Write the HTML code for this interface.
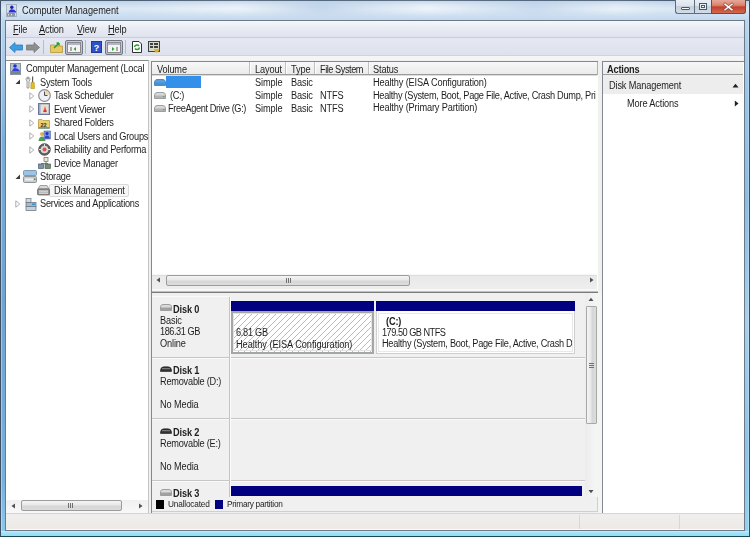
<!DOCTYPE html>
<html><head><meta charset="utf-8">
<style>
*{margin:0;padding:0;box-sizing:border-box}
html,body{width:750px;height:537px;overflow:hidden}
body{position:relative;background:#f0f0f0;font-family:"Liberation Sans",sans-serif;font-size:9px;letter-spacing:-0.1px;color:#1a1a1a}
.a{position:absolute}
.t{position:absolute;white-space:nowrap;line-height:11px;font-size:10px;letter-spacing:-0.15px;transform:scaleX(0.92);transform-origin:0 0;color:#1e1e1e}
.b{font-weight:bold}
svg{position:absolute;overflow:visible}
</style></head><body>
<div class="a" style="left:0px;top:0px;width:750px;height:537px;background:#6fa3d0"></div>
<div class="a" style="left:1px;top:0px;width:4px;height:537px;background:linear-gradient(180deg,#c4dcef 0,#a9cbe8 60px,#7aaed8 140px,#6fa3d0 300px,#78b0dc 480px,#8ccbec 537px)"></div>
<div class="a" style="left:745px;top:0px;width:4px;height:537px;background:linear-gradient(180deg,#c4dcef 0,#9cc6ea 80px,#8abde6 200px,#a6d0ee 320px,#8cc4ea 450px,#90d4f0 537px)"></div>
<div class="a" style="left:1px;top:0px;width:1px;height:537px;background:rgba(255,255,255,.35)"></div>
<div class="a" style="left:748px;top:0px;width:1px;height:537px;background:rgba(255,255,255,.25)"></div>
<div class="a" style="left:0px;top:0px;width:1px;height:537px;background:#3e5068"></div>
<div class="a" style="left:749px;top:0px;width:1px;height:537px;background:#2e5068"></div>
<div class="a" style="left:1px;top:0px;width:748px;height:20px;background:linear-gradient(180deg,#b9d0e8 0,#cfe0f1 25%,#dde9f5 45%,#d2e2f2 65%,#c3d8ee 100%)"></div>
<div class="a" style="left:0px;top:0px;width:750px;height:1px;background:#4c5e72"></div>
<div class="a" style="left:130px;top:3px;width:540px;height:10px;background:linear-gradient(90deg,rgba(255,255,255,0),rgba(255,255,255,.5) 20%,rgba(170,195,225,.5) 35%,rgba(255,255,255,.55) 55%,rgba(175,200,228,.45) 75%,rgba(255,255,255,.4) 90%,rgba(255,255,255,0));filter:blur(3px)"></div>
<div class="a" style="left:1px;top:531px;width:748px;height:6px;background:linear-gradient(180deg,#d4e2f6 0,#d4e2f6 1px,#a8e4f8 1px,#90dcf4 5px,#1a4858 5px)"></div>
<div class="a" style="left:0px;top:536px;width:750px;height:1px;background:#1a4858"></div>
<div class="a" style="left:5px;top:20px;width:740px;height:511px;border:1px solid #6a7a88;background:#f0f0f0"></div>
<svg style="left:5px;top:3px" width="14" height="15" viewBox="0 0 14 15"><rect x="1.5" y="1.5" width="10" height="12" fill="#d4dce4" stroke="#a8b2bc" stroke-width="1"/><rect x="2" y="10" width="8" height="3.5" fill="#8a96a2"/><rect x="3" y="11" width="1" height="1.5" fill="#e0e0e0"/><rect x="6" y="11" width="1" height="1.5" fill="#e0e0e0"/><circle cx="6.8" cy="4.2" r="1.7" fill="#1a20c0"/><path d="M3.5 9.5 Q4.5 6.3 6.8 6.3 Q9.5 6.3 11 8.5 L11 9.5 Z" fill="#2a30d8"/></svg>
<div class="t" style="left:21.5px;top:4.5px;letter-spacing:0;color:#1a1a1a">Computer Management</div>
<div class="a" style="left:675px;top:0;width:20px;height:14px;border:1px solid #5d6d7e;border-top:none;border-right:none;border-radius:0 0 0 3px;background:linear-gradient(180deg,#e9eef4 0,#dbe3ec 45%,#c3cfdb 50%,#d2dde8 100%)"></div>
<div class="a" style="left:694px;top:0;width:18px;height:14px;border:1px solid #5d6d7e;border-top:none;border-right:none;background:linear-gradient(180deg,#e9eef4 0,#dbe3ec 45%,#c3cfdb 50%,#d2dde8 100%)"></div>
<div class="a" style="left:711px;top:0;width:35px;height:14px;border:1px solid #5d5050;border-top:none;border-radius:0 0 3px 0;background:linear-gradient(180deg,#e8a898 0,#d98470 40%,#c4402a 55%,#d46a50 100%)"></div>
<div class="a" style="left:681px;top:7px;width:9px;height:3px;border:1px solid #4a5868;background:#f6f8fa;border-radius:1px"></div>
<div class="a" style="left:699px;top:3px;width:8px;height:7px;border:1px solid #4a5868;background:#e8edf2"></div>
<div class="a" style="left:701px;top:5px;width:4px;height:3px;border:1px solid #4a5868;background:#fff"></div>
<svg style="left:723px;top:3px" width="11" height="8" viewBox="0 0 11 8"><path d="M2 1.2 L9 6.8 M9 1.2 L2 6.8" stroke="#8a4a40" stroke-width="2.8" stroke-linecap="square"/><path d="M2 1.2 L9 6.8 M9 1.2 L2 6.8" stroke="#fff" stroke-width="1.5" stroke-linecap="square"/></svg>
<div class="a" style="left:6px;top:21px;width:738px;height:16px;background:linear-gradient(180deg,#f6f7fb 0,#e8ebf3 50%,#dfe3ee 100%)"></div>
<div class="a" style="left:6px;top:37px;width:738px;height:1px;background:#c8cdd8"></div>
<div class="t " style="left:13px;top:24.3px;"><u>F</u>ile</div>
<div class="t " style="left:39px;top:24.3px;"><u>A</u>ction</div>
<div class="t " style="left:77px;top:24.3px;"><u>V</u>iew</div>
<div class="t " style="left:108px;top:24.3px;"><u>H</u>elp</div>
<div class="a" style="left:6px;top:38px;width:738px;height:17px;background:linear-gradient(180deg,#e6e9f3 0,#dde1ed 100%)"></div>
<div class="a" style="left:6px;top:55px;width:738px;height:1px;background:#cfd3dc"></div>
<div class="a" style="left:6px;top:56px;width:738px;height:4px;background:#f5f5f5"></div>
<svg style="left:9px;top:42px" width="14" height="11" viewBox="0 0 14 11"><path d="M0.5 5.5 L6 0.5 L6 3 L13.5 3 L13.5 8 L6 8 L6 10.5 Z" fill="#3c9ee0" stroke="#2a7cc0" stroke-width="0.8"/></svg>
<svg style="left:26px;top:42px" width="14" height="11" viewBox="0 0 14 11"><path d="M13.5 5.5 L8 0.5 L8 3 L0.5 3 L0.5 8 L8 8 L8 10.5 Z" fill="#8e8e8e" stroke="#7a7a7a" stroke-width="0.8"/></svg>
<div class="a" style="left:43px;top:40px;width:1px;height:14px;background:#b8bcc6"></div>
<svg style="left:50px;top:41px" width="13" height="12" viewBox="0 0 13 12"><path d="M0.5 4 L5 4 L6 5 L12.5 5 L12.5 11.5 L0.5 11.5 Z" fill="#e8c860" stroke="#b89838" stroke-width="0.8"/><path d="M4 7 L9 2 M9 2 L6.5 2 M9 2 L9 4.5" stroke="#30a030" stroke-width="1.6" fill="none"/></svg>
<div class="a" style="left:65px;top:40px;width:18px;height:15px;border:1px solid #707888;border-radius:2px;background:linear-gradient(180deg,#c9ccd6,#b8bcc8)"></div>
<svg style="left:67px;top:42px" width="14" height="11" viewBox="0 0 14 11"><rect x="0.5" y="0.5" width="13" height="10" fill="#f4f4f4" stroke="#8a8a8a"/><rect x="1" y="1" width="12" height="2" fill="#b0b8c8"/><path d="M4 5 L4 9" stroke="#606060"/><path d="M9 5 L6.5 7 L9 9 Z" fill="#30a030"/></svg>
<div class="a" style="left:85px;top:40px;width:1px;height:14px;background:#b8bcc6"></div>
<svg style="left:91px;top:41px" width="11" height="12" viewBox="0 0 11 12"><rect x="0.5" y="0.5" width="10" height="11" fill="#2f50c8" stroke="#2038a0"/><text x="5.5" y="9.5" font-family="Liberation Sans" font-size="9" font-weight="bold" fill="#fff" text-anchor="middle">?</text></svg>
<div class="a" style="left:105px;top:40px;width:18px;height:15px;border:1px solid #707888;border-radius:2px;background:linear-gradient(180deg,#c9ccd6,#b8bcc8)"></div>
<svg style="left:107px;top:42px" width="14" height="11" viewBox="0 0 14 11"><rect x="0.5" y="0.5" width="13" height="10" fill="#f4f4f4" stroke="#8a8a8a"/><rect x="1" y="1" width="12" height="2" fill="#b0b8c8"/><path d="M10 5 L10 9" stroke="#606060"/><path d="M5 5 L7.5 7 L5 9 Z" fill="#30a030"/></svg>
<div class="a" style="left:125px;top:40px;width:1px;height:14px;background:#b8bcc6"></div>
<svg style="left:132px;top:41px" width="10" height="12" viewBox="0 0 10 12"><path d="M0.5 0.5 L7 0.5 L9.5 3 L9.5 11.5 L0.5 11.5 Z" fill="#fff" stroke="#303030"/><path d="M2.5 6 A2.5 2.5 0 0 1 7 5" stroke="#28a028" stroke-width="1.5" fill="none"/><path d="M7.5 6.5 A2.5 2.5 0 0 1 3 7.5" stroke="#28a028" stroke-width="1.5" fill="none"/></svg>
<svg style="left:148px;top:41px" width="12" height="12" viewBox="0 0 12 12"><rect x="0.5" y="0.5" width="11" height="10" fill="#d8d8c8" stroke="#404040"/><rect x="2" y="2" width="3" height="2" fill="#404040"/><rect x="6" y="2" width="4" height="2" fill="#404040"/><rect x="2" y="5" width="3" height="2" fill="#404040"/><rect x="6" y="5" width="4" height="2" fill="#404040"/><path d="M6 8 L11.5 8 L10 11.5 L7 11.5 Z" fill="#e0b020"/></svg>
<div class="a" style="left:6px;top:60px;width:143px;height:454px;background:#fff;border-top:1px solid #8a8a8a;border-right:1px solid #c4c4c4;border-bottom:1px solid #c8c8c8"></div>
<div class="a" style="left:49px;top:184px;width:80px;height:13px;background:#f6f6f6;border:1px solid #d9d9d9;border-radius:2px"></div>
<svg style="left:10px;top:62.7px" width="12" height="12" viewBox="0 0 12 12"><rect x="0.5" y="0.5" width="10" height="11" fill="#b8c0c8" stroke="#8a949e"/><rect x="1" y="8" width="9" height="3" fill="#78848e"/><circle cx="5" cy="3" r="1.8" fill="#2030d0"/><path d="M2 8 Q3 5 5 5 Q8 5 10 8 Z" fill="#3040e0"/></svg>
<div class="t " style="left:25.7px;top:63.3px;letter-spacing:-0.25px">Computer Management (Local</div>
<svg style="left:14.899999999999999px;top:79.2px" width="6" height="6" viewBox="0 0 6 6"><path d="M5 0.5 L5 5 L0.5 5 Z" fill="#3a3a3a"/></svg>
<svg style="left:25px;top:76.2px" width="11" height="13" viewBox="0 0 11 13"><path d="M2.5 1 Q0.5 2 1 4 L2 5 L2 12 L4 12 L4 5 L5 4 Q5.5 2 3.5 1 L3.5 3 L2.5 3 Z" fill="#e8e8e8" stroke="#909090" stroke-width="0.8"/><rect x="7" y="0.5" width="1.2" height="6" fill="#606060"/><path d="M6 6.5 L9.2 6.5 L9.5 12.5 L5.8 12.5 Z" fill="#e0c020" stroke="#b09010" stroke-width="0.6"/></svg>
<div class="t " style="left:39.9px;top:76.8px;letter-spacing:-0.25px">System Tools</div>
<svg style="left:29.4px;top:91.7px" width="6" height="8" viewBox="0 0 6 8"><path d="M0.8 0.8 L4.8 4 L0.8 7.2 Z" fill="none" stroke="#a6a6a6" stroke-width="0.9"/></svg>
<svg style="left:38px;top:89.2px" width="13" height="13" viewBox="0 0 13 13"><circle cx="6.5" cy="6.5" r="5.8" fill="#eef2f8" stroke="#8c8c8c" stroke-width="1.2"/><path d="M6.5 2.5 L6.5 6.5 L9.5 6.5" stroke="#505050" stroke-width="1" fill="none"/><path d="M7 1.5 A5 5 0 0 1 11.5 6 L7 6 Z" fill="#e8d098" opacity=".7"/></svg>
<div class="t " style="left:54.4px;top:90.3px;letter-spacing:-0.25px">Task Scheduler</div>
<svg style="left:29.4px;top:105.2px" width="6" height="8" viewBox="0 0 6 8"><path d="M0.8 0.8 L4.8 4 L0.8 7.2 Z" fill="none" stroke="#a6a6a6" stroke-width="0.9"/></svg>
<svg style="left:38px;top:103.2px" width="12" height="12" viewBox="0 0 12 12"><rect x="0.5" y="0.5" width="11" height="11" fill="#9aa8c8" stroke="#6878a0"/><rect x="2.5" y="1.5" width="8" height="9" fill="#e8e0d0"/><path d="M5 9 L7 3 L9 9 Z" fill="#e07030"/><circle cx="7" cy="8" r="1.3" fill="#d03060"/></svg>
<div class="t " style="left:54.4px;top:103.8px;letter-spacing:-0.25px">Event Viewer</div>
<svg style="left:29.4px;top:118.7px" width="6" height="8" viewBox="0 0 6 8"><path d="M0.8 0.8 L4.8 4 L0.8 7.2 Z" fill="none" stroke="#a6a6a6" stroke-width="0.9"/></svg>
<svg style="left:38px;top:116.7px" width="12" height="12" viewBox="0 0 12 12"><path d="M0.5 2.5 L4 2.5 L5 3.5 L11.5 3.5 L11.5 11.5 L0.5 11.5 Z" fill="#ecd070" stroke="#b09030" stroke-width="0.7"/><text x="5.5" y="10" font-family="Liberation Sans" font-size="5.5" font-weight="bold" fill="#303030" text-anchor="middle">22</text><rect x="0.5" y="10" width="11" height="1.5" fill="#50a0d0"/></svg>
<div class="t " style="left:54.4px;top:117.3px;letter-spacing:-0.25px">Shared Folders</div>
<svg style="left:29.4px;top:132.2px" width="6" height="8" viewBox="0 0 6 8"><path d="M0.8 0.8 L4.8 4 L0.8 7.2 Z" fill="none" stroke="#a6a6a6" stroke-width="0.9"/></svg>
<svg style="left:38px;top:130.2px" width="13" height="12" viewBox="0 0 13 12"><circle cx="4" cy="4" r="2" fill="#e0b050"/><path d="M0.5 11 Q1 6.5 4 6.5 Q7 6.5 7.5 11 Z" fill="#50a050"/><rect x="6" y="1" width="6.5" height="8" fill="#8098d8" stroke="#5068b0" stroke-width="0.6"/><circle cx="9" cy="3.5" r="1.5" fill="#2030c0"/><path d="M6.5 8.5 Q7 5.5 9 5.5 Q11 5.5 12 8.5 Z" fill="#3040d0"/></svg>
<div class="t " style="left:54.4px;top:130.8px;letter-spacing:-0.25px">Local Users and Groups</div>
<svg style="left:29.4px;top:145.7px" width="6" height="8" viewBox="0 0 6 8"><path d="M0.8 0.8 L4.8 4 L0.8 7.2 Z" fill="none" stroke="#a6a6a6" stroke-width="0.9"/></svg>
<svg style="left:38px;top:143.2px" width="13" height="13" viewBox="0 0 13 13"><circle cx="6.5" cy="6.5" r="5.8" fill="#606060" stroke="#404040" stroke-width="0.8"/><circle cx="6.5" cy="6.5" r="3.8" fill="#d8d8d8"/><circle cx="6.5" cy="6.5" r="2" fill="#e05050"/><path d="M6.5 1 L6.5 3 M1 6.5 L3 6.5 M10 6.5 L12 6.5" stroke="#fff" stroke-width="0.8"/></svg>
<div class="t " style="left:54.4px;top:144.3px;letter-spacing:-0.25px">Reliability and Performa</div>
<svg style="left:38px;top:157.2px" width="13" height="12" viewBox="0 0 13 12"><rect x="6" y="0.5" width="4" height="4" fill="#e8e8d0" stroke="#707070" stroke-width="0.7"/><path d="M8 4.5 L8 6.5 M3 6.5 L10 6.5" stroke="#606060" stroke-width="0.8"/><rect x="0.5" y="7" width="5" height="4.5" fill="#8090a8" stroke="#506070" stroke-width="0.7"/><rect x="7" y="7" width="5.5" height="4.5" fill="#709070" stroke="#506050" stroke-width="0.7"/></svg>
<div class="t " style="left:54.4px;top:157.8px;letter-spacing:-0.25px">Device Manager</div>
<svg style="left:14.899999999999999px;top:173.7px" width="6" height="6" viewBox="0 0 6 6"><path d="M5 0.5 L5 5 L0.5 5 Z" fill="#3a3a3a"/></svg>
<svg style="left:23px;top:169.7px" width="14" height="13" viewBox="0 0 14 13"><rect x="0.5" y="0.5" width="13" height="5" rx="1" fill="#9cc4e4" stroke="#6a8aa8" stroke-width="0.8"/><rect x="0.5" y="6.5" width="13" height="6" rx="1" fill="#c8ccd0" stroke="#7c8288" stroke-width="0.8"/><rect x="2" y="8.5" width="8" height="2" fill="#f0f0f0"/><rect x="11" y="8.5" width="1.5" height="1.5" fill="#40a040"/></svg>
<div class="t " style="left:39.9px;top:171.3px;letter-spacing:-0.25px">Storage</div>
<svg style="left:37px;top:184.2px" width="13" height="12" viewBox="0 0 13 12"><path d="M1 5 L3 1.5 L10 1.5 L12 5 Z" fill="#d8d8d8" stroke="#808080" stroke-width="0.7"/><rect x="0.5" y="5" width="12" height="6" rx="1" fill="#909090" stroke="#606060" stroke-width="0.7"/><rect x="2" y="6.5" width="9" height="1.2" fill="#e8e8e8"/><rect x="2" y="8.5" width="9" height="1.2" fill="#e8e8e8"/></svg>
<div class="t " style="left:54.4px;top:184.8px;letter-spacing:-0.25px">Disk Management</div>
<svg style="left:14.899999999999999px;top:199.7px" width="6" height="8" viewBox="0 0 6 8"><path d="M0.8 0.8 L4.8 4 L0.8 7.2 Z" fill="none" stroke="#a6a6a6" stroke-width="0.9"/></svg>
<svg style="left:25px;top:197.7px" width="12" height="13" viewBox="0 0 12 13"><rect x="1" y="0.5" width="5" height="4" fill="#d0d8e0" stroke="#707880" stroke-width="0.7"/><rect x="1" y="4.5" width="10" height="4" fill="#a8b8c8" stroke="#607080" stroke-width="0.7"/><rect x="1" y="8.5" width="10" height="4" fill="#c8d0d8" stroke="#607080" stroke-width="0.7"/><rect x="7" y="5.5" width="3" height="1.5" fill="#3090d0"/></svg>
<div class="t " style="left:39.9px;top:198.3px;letter-spacing:-0.25px">Services and Applications</div>
<div class="a" style="left:6px;top:500px;width:142px;height:13px;background:linear-gradient(180deg,#f0f0f0,#f8f8f8)"></div>
<div class="a" style="left:21px;top:500px;width:101px;height:11px;border:1px solid #9c9c9c;border-radius:2px;background:linear-gradient(180deg,#f4f4f4 0,#e8e8e8 45%,#d6d6d6 55%,#dcdcdc 100%)"></div>
<div class="a" style="left:68px;top:503px;width:1px;height:5px;background:#707070"></div>
<div class="a" style="left:70px;top:503px;width:1px;height:5px;background:#707070"></div>
<div class="a" style="left:72px;top:503px;width:1px;height:5px;background:#707070"></div>
<svg style="left:11px;top:503px" width="5" height="6" viewBox="0 0 5 6"><path d="M4 0.5 L0.5 3 L4 5.5 Z" fill="#505050"/></svg>
<svg style="left:138px;top:503px" width="5" height="6" viewBox="0 0 5 6"><path d="M1 0.5 L4.5 3 L1 5.5 Z" fill="#505050"/></svg>
<div class="a" style="left:151px;top:61px;width:447px;height:232px;background:#fff;border:1px solid #828790;border-bottom:none;border-right:none"></div>
<div class="a" style="left:152px;top:62px;width:445px;height:13px;background:linear-gradient(180deg,#f8f8f8 0,#f0f0f0 50%,#ebebeb 100%)"></div>
<div class="a" style="left:152px;top:74px;width:445px;height:1px;background:#9c9c9c"></div>
<div class="a" style="left:152px;top:75px;width:445px;height:1px;background:#dcdcdc"></div>
<div class="a" style="left:249px;top:62px;width:1px;height:12px;background:#c0c0c0"></div>
<div class="a" style="left:250px;top:62px;width:1px;height:12px;background:#fdfdfd"></div>
<div class="a" style="left:285px;top:62px;width:1px;height:12px;background:#c0c0c0"></div>
<div class="a" style="left:286px;top:62px;width:1px;height:12px;background:#fdfdfd"></div>
<div class="a" style="left:314px;top:62px;width:1px;height:12px;background:#c0c0c0"></div>
<div class="a" style="left:315px;top:62px;width:1px;height:12px;background:#fdfdfd"></div>
<div class="a" style="left:368px;top:62px;width:1px;height:12px;background:#c0c0c0"></div>
<div class="a" style="left:369px;top:62px;width:1px;height:12px;background:#fdfdfd"></div>
<div class="a" style="left:597px;top:62px;width:1px;height:13px;background:#b0b0b0"></div>
<div class="t " style="left:157px;top:63.5px;">Volume</div>
<div class="t " style="left:254.6px;top:63.5px;">Layout</div>
<div class="t " style="left:290.5px;top:63.5px;">Type</div>
<div class="t " style="left:319.8px;top:63.5px;letter-spacing:-0.5px">File System</div>
<div class="t " style="left:373px;top:63.5px;">Status</div>
<div class="a" style="left:166px;top:76px;width:35px;height:12px;background:#3390ea"></div>
<svg style="left:154px;top:79px" width="12" height="7" viewBox="0 0 12 7"><path d="M0.5 3 Q1 0.5 3 0.5 L9 0.5 Q11 0.5 11.5 3 L11.5 6.5 L0.5 6.5 Z" fill="#5aa0e0" stroke="#3a78b8" stroke-width="0.8"/><rect x="1" y="3.5" width="10" height="2.5" fill="#3a78b8" opacity=".45"/><rect x="9" y="4" width="1.5" height="1.2" fill="#50b050"/></svg>
<svg style="left:154px;top:92px" width="12" height="7" viewBox="0 0 12 7"><path d="M0.5 3 Q1 0.5 3 0.5 L9 0.5 Q11 0.5 11.5 3 L11.5 6.5 L0.5 6.5 Z" fill="#d8d8d8" stroke="#8a8a8a" stroke-width="0.8"/><rect x="1" y="3.5" width="10" height="2.5" fill="#8a8a8a" opacity=".45"/><rect x="9" y="4" width="1.5" height="1.2" fill="#50b050"/></svg>
<svg style="left:154px;top:105px" width="12" height="7" viewBox="0 0 12 7"><path d="M0.5 3 Q1 0.5 3 0.5 L9 0.5 Q11 0.5 11.5 3 L11.5 6.5 L0.5 6.5 Z" fill="#d8d8d8" stroke="#8a8a8a" stroke-width="0.8"/><rect x="1" y="3.5" width="10" height="2.5" fill="#8a8a8a" opacity=".45"/><rect x="9" y="4" width="1.5" height="1.2" fill="#50b050"/></svg>
<div class="t " style="left:254.8px;top:77.3px;letter-spacing:-0.1px">Simple</div>
<div class="t " style="left:290.5px;top:77.3px;">Basic</div>
<div class="a" style="left:372px;top:76.9px;width:225px;height:11px;overflow:hidden"><div class="t" style="left:1px;top:0;letter-spacing:-0.15px">Healthy (EISA Configuration)</div></div>
<div class="t " style="left:170px;top:90.0px;letter-spacing:-0.4px">(C:)</div>
<div class="t " style="left:254.8px;top:90.0px;letter-spacing:-0.1px">Simple</div>
<div class="t " style="left:290.5px;top:90.0px;">Basic</div>
<div class="t " style="left:319.8px;top:90.0px;">NTFS</div>
<div class="a" style="left:372px;top:89.6px;width:225px;height:11px;overflow:hidden"><div class="t" style="left:1px;top:0;letter-spacing:-0.3px">Healthy (System, Boot, Page File, Active, Crash Dump, Pri</div></div>
<div class="t " style="left:167.7px;top:102.7px;letter-spacing:-0.4px">FreeAgent Drive (G:)</div>
<div class="t " style="left:254.8px;top:102.7px;letter-spacing:-0.1px">Simple</div>
<div class="t " style="left:290.5px;top:102.7px;">Basic</div>
<div class="t " style="left:319.8px;top:102.7px;">NTFS</div>
<div class="a" style="left:372px;top:102.3px;width:225px;height:11px;overflow:hidden"><div class="t" style="left:1px;top:0;letter-spacing:-0.15px">Healthy (Primary Partition)</div></div>
<div class="a" style="left:152px;top:274px;width:445px;height:18px;background:#f7f7f7"></div>
<div class="a" style="left:152px;top:275px;width:445px;height:14px;background:linear-gradient(180deg,#e9e9e9,#eeeeee);border-top:1px solid #dedede"></div>
<div class="a" style="left:166px;top:275px;width:244px;height:11px;border:1px solid #9c9c9c;border-radius:2px;background:linear-gradient(180deg,#f4f4f4 0,#e8e8e8 45%,#d6d6d6 55%,#dcdcdc 100%)"></div>
<div class="a" style="left:286px;top:278px;width:1px;height:5px;background:#707070"></div>
<div class="a" style="left:288px;top:278px;width:1px;height:5px;background:#707070"></div>
<div class="a" style="left:290px;top:278px;width:1px;height:5px;background:#707070"></div>
<svg style="left:156px;top:277px" width="5" height="6" viewBox="0 0 5 6"><path d="M4 0.5 L0.5 3 L4 5.5 Z" fill="#505050"/></svg>
<svg style="left:589px;top:277px" width="5" height="6" viewBox="0 0 5 6"><path d="M1 0.5 L4.5 3 L1 5.5 Z" fill="#505050"/></svg>
<div class="a" style="left:152px;top:291px;width:446px;height:1px;background:#bfbfbf"></div>
<div class="a" style="left:151px;top:292px;width:447px;height:1px;background:#7c7c7c"></div>
<div class="a" style="left:151px;top:293px;width:1px;height:220px;background:#828790"></div>
<div class="a" style="left:597px;top:293px;width:5px;height:220px;background:#f4f4f4"></div>
<div class="a" style="left:152px;top:293px;width:445px;height:219px;background:#f0f0f0"></div>
<div class="a" style="left:152px;top:357px;width:434px;height:1px;background:#c6c6c6"></div>
<div class="a" style="left:152px;top:358px;width:434px;height:1px;background:#fafafa"></div>
<div class="a" style="left:152px;top:418px;width:434px;height:1px;background:#c6c6c6"></div>
<div class="a" style="left:152px;top:419px;width:434px;height:1px;background:#fafafa"></div>
<div class="a" style="left:152px;top:480px;width:434px;height:1px;background:#c6c6c6"></div>
<div class="a" style="left:152px;top:481px;width:434px;height:1px;background:#fafafa"></div>
<div class="a" style="left:229px;top:297px;width:1px;height:201px;background:#c4c4c4"></div>
<div class="a" style="left:230px;top:297px;width:1px;height:201px;background:#fbfbfb"></div>
<div class="a" style="left:152px;top:296px;width:77px;height:1px;background:#fafafa"></div>
<svg style="left:160px;top:304px" width="12" height="7" viewBox="0 0 12 7"><path d="M0.5 2.5 Q1 0.5 3 0.5 L9 0.5 Q11 0.5 11.5 2.5 L11.5 6.5 L0.5 6.5 Z" fill="#dadada" stroke="#8c8c8c" stroke-width="0.8"/><rect x="1" y="3.5" width="10" height="2.5" fill="#a0a0a0"/><rect x="9" y="4" width="1.5" height="1.3" fill="#70b070"/></svg>
<div class="t b" style="left:173px;top:303.5px;">Disk 0</div>
<div class="t " style="left:159.5px;top:314.6px;">Basic</div>
<div class="t " style="left:159.5px;top:326.4px;letter-spacing:-0.5px">186.31 GB</div>
<div class="t " style="left:159.5px;top:337.8px;">Online</div>
<svg style="left:160px;top:366px" width="12" height="6" viewBox="0 0 12 6"><path d="M0.5 4 Q1 0.8 4 0.8 L8 0.8 Q11 0.8 11.5 4 L11.5 5.5 L0.5 5.5 Z" fill="#303030" stroke="#202020" stroke-width="0.6"/><rect x="2" y="2.2" width="8" height="1" fill="#8a8a8a"/></svg>
<div class="t b" style="left:173px;top:364.8px;">Disk 1</div>
<div class="t " style="left:159.5px;top:376.3px;letter-spacing:-0.25px">Removable (D:)</div>
<div class="t " style="left:159.5px;top:398.8px;letter-spacing:-0.1px">No Media</div>
<svg style="left:160px;top:428px" width="12" height="6" viewBox="0 0 12 6"><path d="M0.5 4 Q1 0.8 4 0.8 L8 0.8 Q11 0.8 11.5 4 L11.5 5.5 L0.5 5.5 Z" fill="#303030" stroke="#202020" stroke-width="0.6"/><rect x="2" y="2.2" width="8" height="1" fill="#8a8a8a"/></svg>
<div class="t b" style="left:173px;top:426.8px;">Disk 2</div>
<div class="t " style="left:159.5px;top:438.3px;letter-spacing:-0.25px">Removable (E:)</div>
<div class="t " style="left:159.5px;top:460.8px;letter-spacing:-0.1px">No Media</div>
<svg style="left:160px;top:489px" width="12" height="7" viewBox="0 0 12 7"><path d="M0.5 2.5 Q1 0.5 3 0.5 L9 0.5 Q11 0.5 11.5 2.5 L11.5 6.5 L0.5 6.5 Z" fill="#dadada" stroke="#8c8c8c" stroke-width="0.8"/><rect x="1" y="3.5" width="10" height="2.5" fill="#a0a0a0"/><rect x="9" y="4" width="1.5" height="1.3" fill="#70b070"/></svg>
<div class="t b" style="left:173px;top:488.3px;">Disk 3</div>
<div class="a" style="left:231px;top:301px;width:143px;height:10px;background:#000080"></div>
<svg style="left:231px;top:311px" width="143" height="43" viewBox="0 0 143 43"><defs><pattern id="h" patternUnits="userSpaceOnUse" width="6" height="6"><path d="M-1 7 L7 -1 M-1 1 L1 -1 M5 7 L7 5" stroke="#b4b4b4" stroke-width="0.9"/></pattern></defs><rect x="0" y="0" width="143" height="43" fill="#fff"/><rect x="0" y="0" width="143" height="43" fill="url(#h)"/><rect x="1" y="1" width="141" height="41" fill="none" stroke="#a4a8a4" stroke-width="2"/></svg>
<div class="a" style="left:233px;top:313px;width:139px;height:38px;border:1px solid #e4e4e4"></div>
<div class="t " style="left:236.3px;top:327.1px;letter-spacing:-0.3px">6.81 GB</div>
<div class="t " style="left:236.3px;top:338.8px;letter-spacing:-0.05px">Healthy (EISA Configuration)</div>
<div class="a" style="left:376px;top:301px;width:199px;height:10px;background:#000080"></div>
<div class="a" style="left:376px;top:311px;width:199px;height:43px;background:#fff;border:1px solid #cfcfcf;border-top:none"></div>
<div class="a" style="left:378px;top:313px;width:195px;height:39px;border:1px solid #e8e8e8;background:#fff"></div>
<div class="t b" style="left:386px;top:315.8px;">(C:)</div>
<div class="t " style="left:382px;top:327.4px;letter-spacing:-0.55px">179.50 GB NTFS</div>
<div class="a" style="left:382px;top:338.0px;width:190px;height:11px;overflow:hidden"><div class="t" style="left:0;top:0;letter-spacing:-0.3px">Healthy (System, Boot, Page File, Active, Crash Dump</div></div>
<div class="a" style="left:231px;top:486px;width:351px;height:10px;background:#000080"></div>
<div class="a" style="left:585px;top:293px;width:12px;height:204px;background:linear-gradient(90deg,#ececec,#f6f6f6)"></div>
<div class="a" style="left:586px;top:306px;width:11px;height:118px;border:1px solid #a8a8a8;border-radius:1px;background:linear-gradient(90deg,#f4f4f4 0,#e8e8e8 45%,#d6d6d6 55%,#dcdcdc 100%)"></div>
<div class="a" style="left:589px;top:363px;width:5px;height:1px;background:#707070"></div>
<div class="a" style="left:589px;top:365px;width:5px;height:1px;background:#707070"></div>
<div class="a" style="left:589px;top:367px;width:5px;height:1px;background:#707070"></div>
<svg style="left:588px;top:297px" width="6" height="5" viewBox="0 0 6 5"><path d="M0.5 4 L3 0.8 L5.5 4 Z" fill="#505050"/></svg>
<svg style="left:588px;top:489px" width="6" height="5" viewBox="0 0 6 5"><path d="M0.5 1 L3 4.2 L5.5 1 Z" fill="#505050"/></svg>
<div class="a" style="left:152px;top:497px;width:446px;height:15px;background:#f0f0f0;border-right:1px solid #cfcfcf;border-bottom:1px solid #cfcfcf"></div>
<div class="a" style="left:156px;top:500px;width:8px;height:9px;background:#000"></div>
<div class="t " style="left:168.4px;top:499.1px;letter-spacing:-0.2px;font-size:9px;color:#1e1e1e">Unallocated</div>
<div class="a" style="left:215px;top:500px;width:8px;height:9px;background:#000080"></div>
<div class="t " style="left:226.6px;top:499.1px;letter-spacing:-0.3px;font-size:9px;color:#1e1e1e">Primary partition</div>
<div class="a" style="left:602px;top:61px;width:142px;height:452px;background:#fff;border:1px solid #828790;border-right:none;border-bottom:none"></div>
<div class="a" style="left:603px;top:62px;width:140px;height:12px;background:linear-gradient(180deg,#f6f6f6,#ececec)"></div>
<div class="a" style="left:603px;top:74px;width:140px;height:1px;background:#a0a0a0"></div>
<div class="t b" style="left:607.2px;top:63.7px;letter-spacing:-0.2px">Actions</div>
<div class="a" style="left:603px;top:75px;width:140px;height:19px;background:#ededed"></div>
<div class="t " style="left:608.8px;top:80.2px;">Disk Management</div>
<svg style="left:732px;top:83px" width="7" height="5" viewBox="0 0 7 5"><path d="M0.5 4.5 L3.5 0.8 L6.5 4.5 Z" fill="#202020"/></svg>
<div class="t " style="left:626.7px;top:98.3px;">More Actions</div>
<svg style="left:734px;top:100px" width="5" height="7" viewBox="0 0 5 7"><path d="M0.8 0.5 L4.5 3.5 L0.8 6.5 Z" fill="#202020"/></svg>
<div class="a" style="left:6px;top:513px;width:738px;height:1px;background:#d5d5d5"></div>
<div class="a" style="left:6px;top:514px;width:738px;height:15px;background:linear-gradient(180deg,#f1efed,#ece9e7)"></div>
<div class="a" style="left:6px;top:529px;width:738px;height:1px;background:#fafcfc"></div>
<div class="a" style="left:579px;top:515px;width:1px;height:14px;background:#d9d6d4"></div>
<div class="a" style="left:679px;top:515px;width:1px;height:14px;background:#d9d6d4"></div>
</body></html>
